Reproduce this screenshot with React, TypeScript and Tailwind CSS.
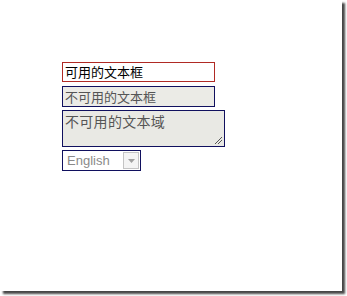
import React from "react";

export default function App() {
  const cjk = { fontFamily: '"Noto Sans CJK SC", "Liberation Sans", sans-serif' };
  return (
    <div className="w-[347px] h-[296px] bg-white relative overflow-hidden">
      <div className="w-[342px] h-[291px] bg-white shadow-[3px_3px_2px_0px_rgba(50,50,50,0.9)] flex flex-col pt-[62px] pl-[62px]">
        <div
          className="w-[153px] h-[20px] border border-[#b02a24] bg-white text-[13px] leading-[18px] text-black pl-[2px] whitespace-nowrap"
          style={cjk}
        >
          可用的文本框
        </div>
        <div
          className="mt-[4px] w-[153px] h-[21px] border border-[#10105e] bg-[#ebebe6] text-[13px] leading-[19px] text-[#555555] pl-[2px] whitespace-nowrap"
          style={cjk}
        >
          不可用的文本框
        </div>
        <div
          className="mt-[3px] w-[163px] h-[37px] border border-[#10105e] bg-[#e9e9e4] text-[14px] leading-[17px] text-[#555555] pl-[2px] pt-[2px] whitespace-nowrap relative tracking-[0.3px]"
          style={cjk}
        >
          不可用的文本域
          <svg className="absolute right-[1px] bottom-[1px]" width="9" height="9" viewBox="0 0 9 9">
            <line x1="8" y1="1" x2="1" y2="8" stroke="#555" strokeWidth="1" />
            <line x1="8" y1="4" x2="4" y2="8" stroke="#555" strokeWidth="1" />
          </svg>
        </div>
        <div className="mt-[3px] w-[79px] h-[21px] border border-[#10105e] bg-white flex items-center">
          <span
            className="flex-1 text-[13px] text-[#8a8a8a] pl-[4px] leading-none"
            style={{ fontFamily: '"Liberation Sans", Arial, sans-serif' }}
          >
            English
          </span>
          <div className="w-[16px] h-[17px] mr-[1px] border border-[#c4c4c4] bg-[#f4f4f4] flex items-center justify-center">
            <svg width="7" height="4" viewBox="0 0 7 4">
              <polygon points="0,0 7,0 3.5,4" fill="#a0a0a0" />
            </svg>
          </div>
        </div>
      </div>
    </div>
  );
}
